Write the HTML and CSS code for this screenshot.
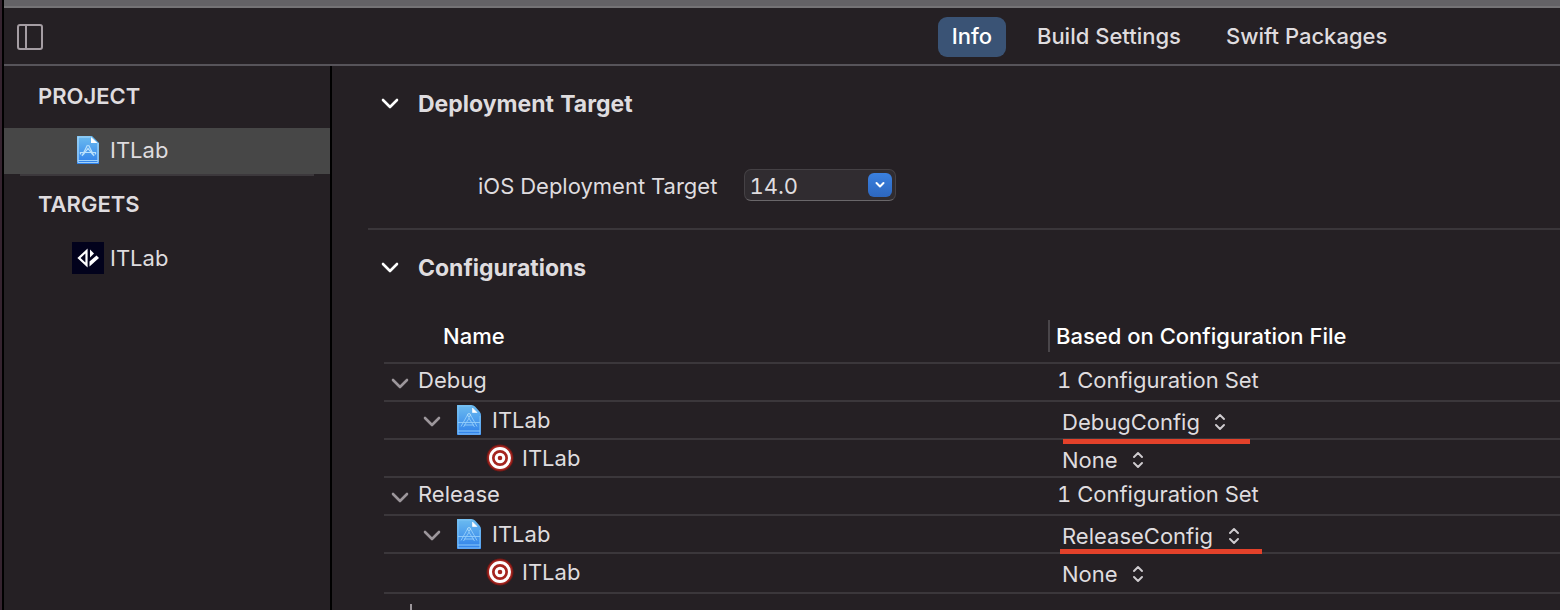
FILE: index.html
```html
<!DOCTYPE html>
<html lang="en">
<head>
<meta charset="utf-8">
<title>ITLab project editor</title>
<link rel="stylesheet" href="styles.css">
</head>
<body>
<svg class="defs" aria-hidden="true">
  <defs>
    <linearGradient id="blueprint" x1="0" y1="0" x2="0" y2="1">
      <stop offset="0" stop-color="#6cbcf0"/>
      <stop offset="1" stop-color="#2f80ea"/>
    </linearGradient>
    <symbol id="doc" viewBox="0 0 24 32">
      <path d="M0 1h14.500q2 0 3.500 1.500l4.500 5q1.500 1.500 1.500 3.500V31H0z" fill="url(#blueprint)"/>
      <path d="M1 30v-28h13M23 12v18" fill="none" stroke="#7fc4f5" stroke-width="1"/>
      <path d="M15.500 4v4.500h4.500z" fill="#fff" stroke="#fff" stroke-width=".6"/>
      <path d="M1 27h22M1 30h22" stroke="#8bc8fa" stroke-width="1"/>
      <path d="M11 10L4 22.500M13 10l7 12.500M12.500 13.500l-6 9.500M11.500 13.500l6 9.500M1 18.500h22M7 21h10" fill="none" stroke="#93cdfa" stroke-width=".9"/>
      <circle cx="12" cy="11" r="1.500" fill="none" stroke="#b0dcfb" stroke-width=".9"/>
    </symbol>
    <symbol id="doc-small" viewBox="0 0 24 30">
      <path d="M1 1h15l7 7v21H1z" fill="url(#blueprint)"/>
      <path d="M2 27.500V2h12.500M22 8v19.500" fill="none" stroke="#a9dafa" stroke-width="1.200"/>
      <path d="M15 2v6h6.500z" fill="#fff"/>
      <path d="M2 27.500h20M2 25.500h20" stroke="#9fd3fb" stroke-width="1"/>
      <path d="M11.500 10L6 21M12.500 10L18 21M4 17.500h16M7 20l5-6.500 5 6.500M4 17.500l1 2M20 17.500l-1 2" fill="none" stroke="#b9e0fc" stroke-width="1.200"/>
    </symbol>
    <symbol id="target" viewBox="0 0 28 28">
      <circle cx="14" cy="14" r="13.500" fill="#6f1917"/>
      <circle cx="14" cy="14" r="12.500" fill="#a5251f"/>
      <circle cx="14" cy="14" r="9.500" fill="none" stroke="#fff" stroke-width="3"/>
      <circle cx="14" cy="14" r="3.800" fill="none" stroke="#fff" stroke-width="3"/>
    </symbol>
    <symbol id="chevron" viewBox="0 0 18 12">
      <path d="M2 2l7 7 7-7" fill="none" stroke="currentColor" stroke-width="2.600" stroke-linecap="round" stroke-linejoin="round"/>
    </symbol>
    <symbol id="chevron-small" viewBox="0 0 12 8">
      <path d="M2.500 2l3.500 3.500 3.500-3.500" fill="none" stroke="currentColor" stroke-width="2" stroke-linecap="round" stroke-linejoin="round"/>
    </symbol>
    <symbol id="updown" viewBox="0 0 12 16">
      <path d="M2 5l4-4 4 4M2 11l4 4 4-4" fill="none" stroke="currentColor" stroke-width="1.900" stroke-linecap="round" stroke-linejoin="round"/>
    </symbol>
  </defs>
</svg>
<div class="window">
  <div class="titlebar"></div>
  <header class="toolbar">
    <button class="icon-button" type="button" aria-label="Toggle sidebar">
      <svg width="26" height="26" viewBox="0 0 26 26"><rect x="1" y="1" width="24" height="24" rx="2" fill="none" stroke="currentColor" stroke-width="2"/><path d="M9 1v24" stroke="currentColor" stroke-width="2"/></svg>
    </button>
    <nav class="tabs">
      <button class="tab tab-active" type="button">Info</button>
      <button class="tab" type="button">Build Settings</button>
      <button class="tab" type="button">Swift Packages</button>
    </nav>
  </header>
  <div class="body">
    <aside class="sidebar">
      <h2 class="group-title">PROJECT</h2>
      <button class="item item-selected" type="button"><svg class="item-doc"><use href="#doc-small"/></svg>ITLab</button>
      <hr class="sidebar-rule">
      <h2 class="group-title">TARGETS</h2>
      <button class="item" type="button">
        <svg class="item-app" viewBox="0 0 32 32"><path d="M0 0h32v32H0z" fill="#02021c"/><path d="M14.500 9v14L7 16z" fill="none" stroke="#fff" stroke-width="2.200"/><path d="M18 7.500l4 4-4 4z" fill="#fff"/><path d="M17.500 19.500l7-6 2.500 2.500-9.500 8.500z" fill="#fff"/></svg>ITLab
      </button>
    </aside>
    <main class="editor">
      <section class="section section-target">
        <h2 class="section-title"><button class="disclosure" type="button" aria-label="Collapse Deployment Target"><svg class="chevron"><use href="#chevron"/></svg></button>Deployment Target</h2>
        <div class="field">
          <label for="ios">iOS Deployment Target</label>
          <div class="combo">
            <input id="ios" class="combo-input" type="text" value="14.0">
            <button class="combo-button" type="button" aria-label="Show versions"><svg width="12" height="8"><use href="#chevron-small"/></svg></button>
          </div>
        </div>
      </section>
      <section class="section">
        <h2 class="section-title"><button class="disclosure" type="button" aria-label="Collapse Configurations"><svg class="chevron"><use href="#chevron"/></svg></button>Configurations</h2>
        <table class="configs">
          <colgroup><col class="col-name"><col></colgroup>
          <thead>
            <tr><th scope="col" class="head-name">Name</th><th scope="col"><span class="head-file">Based on Configuration File</span></th></tr>
          </thead>
          <tbody>
            <tr>
              <td><div class="cell level-1"><button class="disclosure muted" type="button" aria-label="Collapse Debug"><svg class="chevron"><use href="#chevron"/></svg></button>Debug</div></td>
              <td><div class="cell summary">1 Configuration Set</div></td>
            </tr>
            <tr>
              <td><div class="cell level-2"><button class="disclosure muted" type="button" aria-label="Collapse ITLab"><svg class="chevron"><use href="#chevron"/></svg></button><svg class="row-doc"><use href="#doc"/></svg>ITLab</div></td>
              <td class="marked"><div class="cell choice"><select class="picker" aria-label="Debug project configuration"><option>DebugConfig</option></select><svg class="updown"><use href="#updown"/></svg></div><span class="mark mark-debug"></span></td>
            </tr>
            <tr>
              <td><div class="cell level-3"><svg class="row-target"><use href="#target"/></svg>ITLab</div></td>
              <td><div class="cell choice"><select class="picker" aria-label="Debug target configuration"><option>None</option></select><svg class="updown"><use href="#updown"/></svg></div></td>
            </tr>
            <tr>
              <td><div class="cell level-1"><button class="disclosure muted" type="button" aria-label="Collapse Release"><svg class="chevron"><use href="#chevron"/></svg></button>Release</div></td>
              <td><div class="cell summary">1 Configuration Set</div></td>
            </tr>
            <tr>
              <td><div class="cell level-2"><button class="disclosure muted" type="button" aria-label="Collapse ITLab"><svg class="chevron"><use href="#chevron"/></svg></button><svg class="row-doc"><use href="#doc"/></svg>ITLab</div></td>
              <td class="marked"><div class="cell choice"><select class="picker" aria-label="Release project configuration"><option>ReleaseConfig</option></select><svg class="updown"><use href="#updown"/></svg></div><span class="mark mark-release"></span></td>
            </tr>
            <tr class="last">
              <td><div class="cell level-3"><svg class="row-target"><use href="#target"/></svg>ITLab</div></td>
              <td><div class="cell choice"><select class="picker" aria-label="Release target configuration"><option>None</option></select><svg class="updown"><use href="#updown"/></svg></div></td>
            </tr>
          </tbody>
        </table>
        <button class="add" type="button" aria-label="Add configuration"><svg width="22" height="22" viewBox="0 0 22 22"><path d="M11 0v22M0 11h22" stroke="currentColor" stroke-width="2"/></svg></button>
      </section>
    </main>
  </div>
</div>
</body>
</html>
```

FILE: styles.css
```css
* { box-sizing: border-box; }

body {
  margin: 0;
  height: 100vh;
  overflow: hidden;
  background: #252024;
  color: #dfdcdf;
  font: 22px/28px Inter, "Liberation Sans", sans-serif;
  font-variant-numeric: tabular-nums;
}

button, input, select { font: inherit; font-variant-numeric: inherit; color: inherit; }
button { margin: 0; padding: 0; border: 0; background: none; }
h2 { margin: 0; font-size: 22px; line-height: 28px; font-weight: 600; }
svg { display: block; flex: none; }
.defs { position: absolute; width: 0; height: 0; }

.window {
  display: flex;
  flex-direction: column;
  height: 100vh;
  overflow: hidden;
  border-left: 2px solid #35232f;
  box-shadow: inset 2px 0 #000;
  padding-left: 2px;
}

.titlebar { flex: none; height: 8px; background: #646266; border-bottom: 2px solid #757376; }

.toolbar {
  flex: none;
  display: flex;
  align-items: center;
  height: 58px;
  padding: 2px 0 0 13px;
  border-bottom: 2px solid #57545a;
}
.icon-button { color: #a59da3; }
.tabs { display: flex; gap: 17px; margin: 0 auto; padding-left: 736px; }
.tab { height: 40px; padding: 0 14px 2px; border-radius: 9px; font-weight: 500; }
.tab-active { background: #3a5375; color: #fff; }

.body { flex: 1; display: flex; min-height: 0; }

.sidebar { flex: none; width: 328px; padding-top: 16px; border-right: 2px solid #000; }
.group-title { padding: 0 34px; }
.item { display: flex; align-items: center; width: 100%; height: 46px; margin-top: 18px; padding: 0 0 2px 68px; gap: 6px; }
.item-selected { background: #474747; }
.item-doc { width: 24px; height: 30px; margin: 0 4px; }
.item-app { width: 32px; height: 32px; }
.sidebar-rule { height: 2px; margin: 0 16px 14px; border: 0; background: #3c383c; }

.editor { flex: 1; min-width: 0; padding-left: 36px; }
.section { padding: 24px 0 0 16px; }
.section-target { padding-bottom: 27px; border-bottom: 2px solid #3a363a; }
.section-title { display: flex; align-items: center; font-size: 23px; font-weight: 700; }
.disclosure { display: flex; align-items: center; width: 34px; height: 28px; flex: none; color: #fff; }
.section-title .disclosure { margin-left: -3px; width: 37px; }
.chevron { width: 18px; height: 12px; }
.muted { color: #9c969b; padding-left: 7px; padding-top: 4px; }

.field { display: flex; align-items: center; gap: 26px; margin-top: 51px; padding-left: 94px; }
.field label { padding: 2px 1px 0 0; }
.combo {
  display: flex;
  align-items: center;
  width: 152px;
  height: 32px;
  padding-right: 3px;
  border: 1px solid #454145;
  border-bottom-color: #6a676a;
  border-radius: 7px;
  background: #302c30;
}
.combo-input { flex: 1; min-width: 0; padding: 2px 0 0 4px; border: 0; outline: 0; background: none; }
.combo-button { display: grid; place-items: center; width: 24px; height: 24px; border-radius: 6px; background: linear-gradient(#3a80df, #2d67bf); color: #fff; }

.configs { width: 100%; margin-top: 26px; border-spacing: 0; table-layout: fixed; }
.col-name { width: 664px; }
.configs th, .configs td { padding: 0; border-bottom: 2px solid #3b373b; text-align: left; }
.configs th { height: 56px; padding-top: 2px; color: #fff; font-weight: 500; }
.configs .head-name { padding-left: 59px; }
.head-file { display: block; padding-left: 6px; line-height: 32px; border-left: 2px solid #4a464a; }
.cell { display: flex; align-items: center; height: 36px; }
.last .cell { height: 38px; padding-bottom: 2px; }
.level-1, .summary { padding-bottom: 4px; }
.level-1 .disclosure { padding-top: 8px; }
.level-2 { padding-left: 32px; }
.level-3 { padding-left: 102px; gap: 8px; }
.level-2 .disclosure { width: 41px; }
.row-doc { width: 24px; height: 32px; margin-right: 11px; }
.row-target { width: 28px; height: 28px; }
.summary { padding-left: 9px; }
.choice { padding: 4px 0 0 14px; gap: 14px; }
.last .choice { padding-bottom: 2px; }
.picker { appearance: none; height: 32px; padding: 0; border: 0; outline: 0; background: none; }
.updown { width: 12px; height: 16px; color: #cfcbcf; }

.marked { position: relative; }
.mark { position: absolute; height: 5px; background: #e3412a; }
.mark-debug { left: 15px; bottom: -6px; width: 187px; }
.mark-release { left: 12px; bottom: -2px; width: 202px; }

.add { margin: 10px 0 0 16px; color: #9c969b; }
```
